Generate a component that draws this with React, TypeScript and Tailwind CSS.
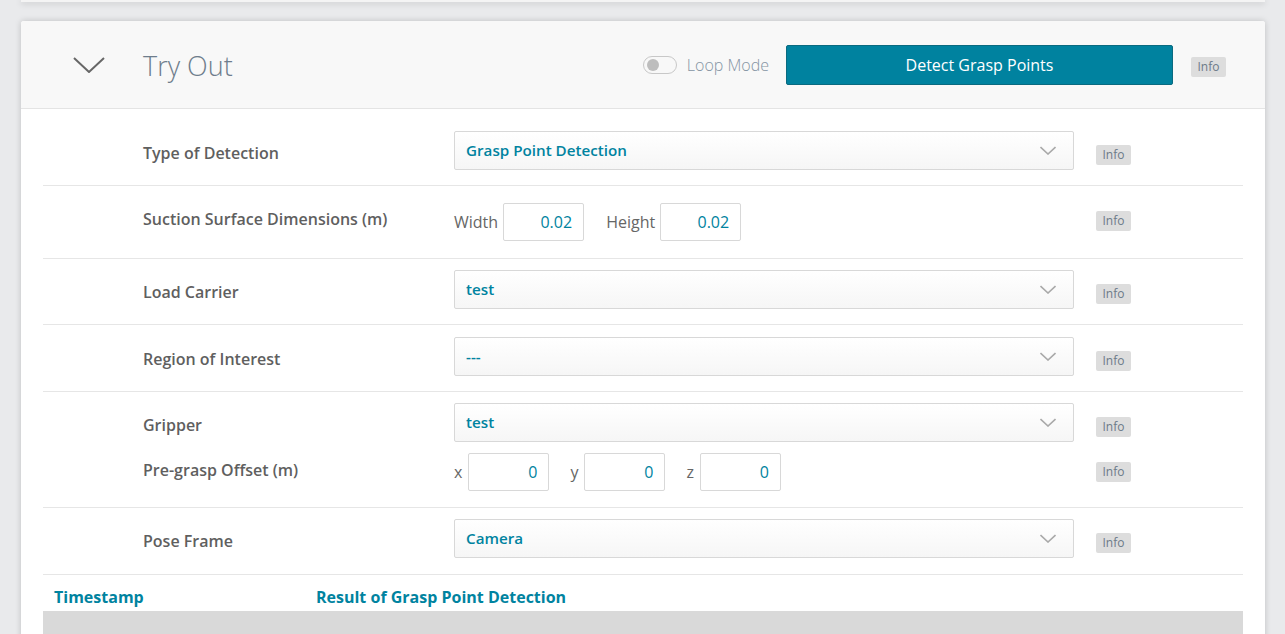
import type { ReactNode } from "react";

const font = { fontFamily: '"Open Sans", "Liberation Sans", sans-serif' };

function InfoBadge() {
  return (
    <span className="inline-flex h-[20px] w-[35px] items-center justify-center rounded-[2px] bg-[#dddddd] text-[12px] text-[#6c7a88]">
      Info
    </span>
  );
}

function Chevron({ className, strokeWidth = 2 }: { className: string; strokeWidth?: number }) {
  return (
    <svg className={className} viewBox="0 0 32 16" fill="none" stroke="currentColor" strokeWidth={strokeWidth}>
      <path d="M1 1l15 14L31 1" />
    </svg>
  );
}

function Select({ value }: { value: string }) {
  return (
    <div className="flex h-[39px] w-[620px] items-center justify-between rounded-[2px] border border-[#d8d8d8] bg-gradient-to-b from-white to-[#f6f6f6] pl-[11px] pr-[17px]">
      <span className="text-[15.2px] font-semibold text-[#0083a0]">{value}</span>
      <Chevron className="h-[9px] w-[16px] text-[#a9a9a9]" strokeWidth={3.2} />
    </div>
  );
}

function NumberInput({ value }: { value: string }) {
  return (
    <div className="flex h-[38px] w-[81px] items-center justify-end rounded-[2px] border border-[#d8d8d8] bg-white pr-[11px] text-[16px] text-[#0083a0]">
      {value}
    </div>
  );
}

function Row({ label, children, labelClass = "mt-[5px]", className = "" }: { label: string; children: ReactNode; labelClass?: string; className?: string }) {
  return (
    <div className={`flex items-center border-b border-[#e6e6e6] ${className}`}>
      <div className={`w-[411px] pl-[100px] text-[16px] font-semibold text-[#5f5f5f] ${labelClass}`}>{label}</div>
      <div className="w-[642px]">{children}</div>
      <div className={labelClass}>
        <InfoBadge />
      </div>
    </div>
  );
}

export default function App() {
  return (
    <div className="h-[634px] overflow-hidden bg-[#e9eaec] pl-[21px] pr-[20px]" style={font}>
      {/* previous card edge */}
      <div className="h-[2px] bg-[#f4f4f4] shadow-[0_1px_6px_rgba(0,0,0,0.25)]" />

      <div className="mt-[19px] rounded-[3px] bg-white shadow-[0_0_6px_rgba(0,0,0,0.18)]">
        {/* Header */}
        <div className="flex h-[88px] items-center rounded-t-[3px] border-b border-[#e4e4e4] bg-[#f8f8f8] pl-[52px] pr-[39px]">
          <Chevron className="h-[16px] w-[32px] text-[#676767]" />
          <h2 className="ml-[38px] mt-[4px] text-[27px] font-light text-[#6e7d8c]">Try Out</h2>
          <div className="ml-auto flex items-center">
            <span className="flex h-[18px] w-[34px] items-center rounded-full border border-[#c8c8c8] bg-[#f8f8f8] pl-[3px]">
              <span className="h-[12px] w-[12px] rounded-full bg-[#bdbdbd]" />
            </span>
            <span className="ml-[10px] text-[16px] font-light text-[#8494a3]">Loop Mode</span>
            <button className="ml-[17px] h-[40px] w-[387px] rounded-[2px] border border-[#0a6a80] bg-[#00829f] text-[16px] font-medium text-white">
              Detect Grasp Points
            </button>
            <span className="ml-[18px]">
              <InfoBadge />
            </span>
          </div>
        </div>

        {/* Form */}
        <div className="px-[22px] pt-[10px]">
          <Row label="Type of Detection" className="pb-[15px] pt-[12px]">
            <Select value="Grasp Point Detection" />
          </Row>
          <Row label="Suction Surface Dimensions (m)" labelClass="-mt-[6px]" className="pb-[17px] pt-[17px]">
            <div className="flex items-center text-[16px] text-[#666]">
              <span>Width</span>
              <span className="ml-[5px]">
                <NumberInput value="0.02" />
              </span>
              <span className="ml-[22px]">Height</span>
              <span className="ml-[5px]">
                <NumberInput value="0.02" />
              </span>
            </div>
          </Row>
          <Row label="Load Carrier" className="pb-[15px] pt-[11px]">
            <Select value="test" />
          </Row>
          <Row label="Region of Interest" className="pb-[15px] pt-[12px]">
            <Select value="---" />
          </Row>
          <div className="border-b border-[#e6e6e6] pb-[16px] pt-[11px]">
            <div className="flex items-center">
              <div className="mt-[5px] w-[411px] pl-[100px] text-[16px] font-semibold text-[#5f5f5f]">Gripper</div>
              <div className="w-[642px]">
                <Select value="test" />
              </div>
              <div className="mt-[5px]">
                <InfoBadge />
              </div>
            </div>
            <div className="mt-[11px] flex items-center">
              <div className="-mt-[4px] w-[411px] pl-[100px] text-[16px] font-semibold text-[#5f5f5f]">Pre-grasp Offset (m)</div>
              <div className="flex w-[642px] items-center text-[16px] text-[#666]">
                <span>x</span>
                <span className="ml-[6px]">
                  <NumberInput value="0" />
                </span>
                <span className="ml-[21px]">y</span>
                <span className="ml-[6px]">
                  <NumberInput value="0" />
                </span>
                <span className="ml-[21px]">z</span>
                <span className="ml-[6px]">
                  <NumberInput value="0" />
                </span>
              </div>
              <div className="-mt-[4px]">
                <InfoBadge />
              </div>
            </div>
          </div>
          <Row label="Pose Frame" className="pb-[16px] pt-[11px]">
            <Select value="Camera" />
          </Row>

          {/* Results table */}
          <div className="flex pb-[2px] pt-[10px] text-[16px] font-bold text-[#0083a0]">
            <span className="w-[273px] pl-[11px]">Timestamp</span>
            <span>Result of Grasp Point Detection</span>
          </div>
          <div className="h-[60px] bg-[#d9d9d9]" />
        </div>
      </div>
    </div>
  );
}
